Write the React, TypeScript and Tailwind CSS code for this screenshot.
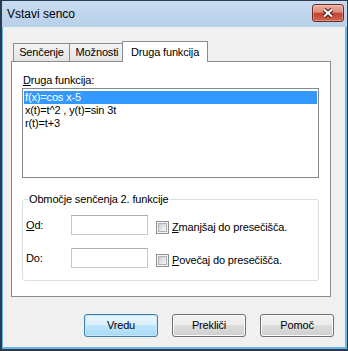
import React from "react";

const items = ["f(x)=cos x-5", "x(t)=t^2 , y(t)=sin 3t", "r(t)=t+3"];

function CloseButton() {
  return (
    <div className="w-[32px] h-[18px] rounded-[3px] border border-[#6b2a22] bg-[linear-gradient(to_bottom,#eab0a2_0%,#dc8c7a_45%,#c4432f_52%,#cf644f_100%)] shadow-[inset_0_0_0_1px_rgba(255,255,255,0.3)] flex items-center justify-center">
      <svg width="12" height="10" viewBox="0 0 12 10">
        <path d="M2 1.5 L10 8.5 M10 1.5 L2 8.5" stroke="#4a1510" strokeWidth="4.2" />
        <path d="M2 1.5 L10 8.5 M10 1.5 L2 8.5" stroke="#ffffff" strokeWidth="2.2" />
      </svg>
    </div>
  );
}

function Checkbox() {
  return (
    <div className="w-[13px] h-[13px] border border-[#8e8f8f] bg-[#f4f4f4] p-[1px] flex">
      <div className="flex-1 border border-[#aeb3b9] bg-[linear-gradient(135deg,#cdd1d5_0%,#e6e8ea_60%,#f6f6f6_100%)]" />
    </div>
  );
}

function Button({ label, primary }: { label: string; primary?: boolean }) {
  return (
    <div
      className={
        primary
          ? "w-[74px] h-[23px] rounded-[3px] border border-[#3c7fb1] bg-[linear-gradient(to_bottom,#eaf6fd_0%,#d9f0fc_50%,#bee6fd_50%,#a7d9f5_100%)] shadow-[inset_0_0_0_1px_#c6e8fa] flex items-center justify-center"
          : "w-[74px] h-[23px] rounded-[3px] border border-[#707070] bg-[linear-gradient(to_bottom,#f2f2f2_0%,#ebebeb_50%,#dddddd_50%,#cfcfcf_100%)] shadow-[inset_0_0_0_1px_#fcfcfc] flex items-center justify-center"
      }
    >
      {label}
    </div>
  );
}

function Row({ acc, rest, cbAcc, cbRest, first }: { acc?: string; rest: string; cbAcc: string; cbRest: string; first?: boolean }) {
  return (
    <div className={`flex items-start pl-[3px] ${first ? "mt-[9px]" : "mt-[13px]"}`}>
      <div className="w-[45px] mt-[4px] leading-[13px]">
        {acc ? <span className="underline">{acc}</span> : null}
        {rest}
      </div>
      <div className="w-[77px] h-[20px] border border-[#c5c8cd] border-t-[#abadb3] bg-white" />
      <div className="flex items-center gap-[3px] ml-[8px] mt-[6px] leading-[13px]">
        <Checkbox />
        <span>
          <span className="underline">{cbAcc}</span>
          {cbRest}
        </span>
      </div>
    </div>
  );
}

export default function App() {
  return (
    <div className="w-[348px] h-[351px] flex flex-col border-l-2 border-t border-r border-b-2 border-[#2a3b50] bg-[#68b4e6] font-['Liberation_Sans',Arial,sans-serif] text-[11px] tracking-[-0.15px] text-black">
      {/* title bar */}
      <div className="h-[26px] flex justify-between items-start pl-[5px] pr-[3px] pt-[3px] bg-[linear-gradient(to_bottom,#c8dbf1,#b9d0ea)]">
        <div className="text-[12px] tracking-normal leading-[16px] mt-[2px]">Vstavi senco</div>
        <CloseButton />
      </div>

      {/* client */}
      <div className="flex-1 ml-[1px] mr-[1px] mb-[2px] bg-[#f0f0f0] border-r border-[#a3a9b0] flex flex-col pt-[14px] pl-[8px]">
        {/* tabs */}
        <div className="flex items-end h-[20px] pl-[2px]">
          <div className="w-[57px] h-[18px] border-t border-l border-r border-[#898c95] bg-[linear-gradient(to_bottom,#f4f4f4,#e4e4e4)] flex items-center justify-center leading-[13px]">
            Senčenje
          </div>
          <div className="w-[55px] h-[18px] border-t border-r border-[#898c95] bg-[linear-gradient(to_bottom,#f4f4f4,#e4e4e4)] flex items-center justify-center leading-[13px]">
            Možnosti
          </div>
          <div className="relative z-10 -ml-[3px] -mb-px w-[86px] h-[21px] border-t border-l border-r border-[#898c95] bg-white flex items-center justify-center leading-[13px]">
            Druga funkcija
          </div>
        </div>

        {/* panel */}
        <div className="w-[320px] h-[236px] border border-[#898c95] bg-white flex flex-col pl-[10px] pt-[12px]">
          <div className="leading-[13px] h-[13px] pl-[1px]">
            <span className="underline">D</span>ruga funkcija:
          </div>
          <div className="mt-[1px] w-[297px] h-[90px] border border-[#828790] bg-white pt-[2px] px-[1px] flex flex-col">
            {items.map((it, i) => (
              <div
                key={it}
                className={i === 0 ? "h-[13px] leading-[13px] pl-[1px] bg-[#3399ff] text-white" : "h-[13px] leading-[13px] pl-[1px]"}
              >
                {it}
              </div>
            ))}
          </div>

          <fieldset className="mt-[15px] w-[297px] border border-[#d5dfe5] rounded-[3px] pb-[12px]">
            <legend className="ml-[5px] px-[1px] leading-[13px]">Območje senčenja 2. funkcije</legend>
            <Row first acc="O" rest="d:" cbAcc="Z" cbRest="manjšaj do presečišča." />
            <Row rest="Do:" cbAcc="P" cbRest="ovečaj do presečišča." />
          </fieldset>
        </div>

        {/* buttons */}
        <div className="flex justify-end gap-[14px] pr-[11px] mt-[17px]">
          <Button label="Vredu" primary />
          <Button label="Prekliči" />
          <Button label="Pomoč" />
        </div>
      </div>
    </div>
  );
}
